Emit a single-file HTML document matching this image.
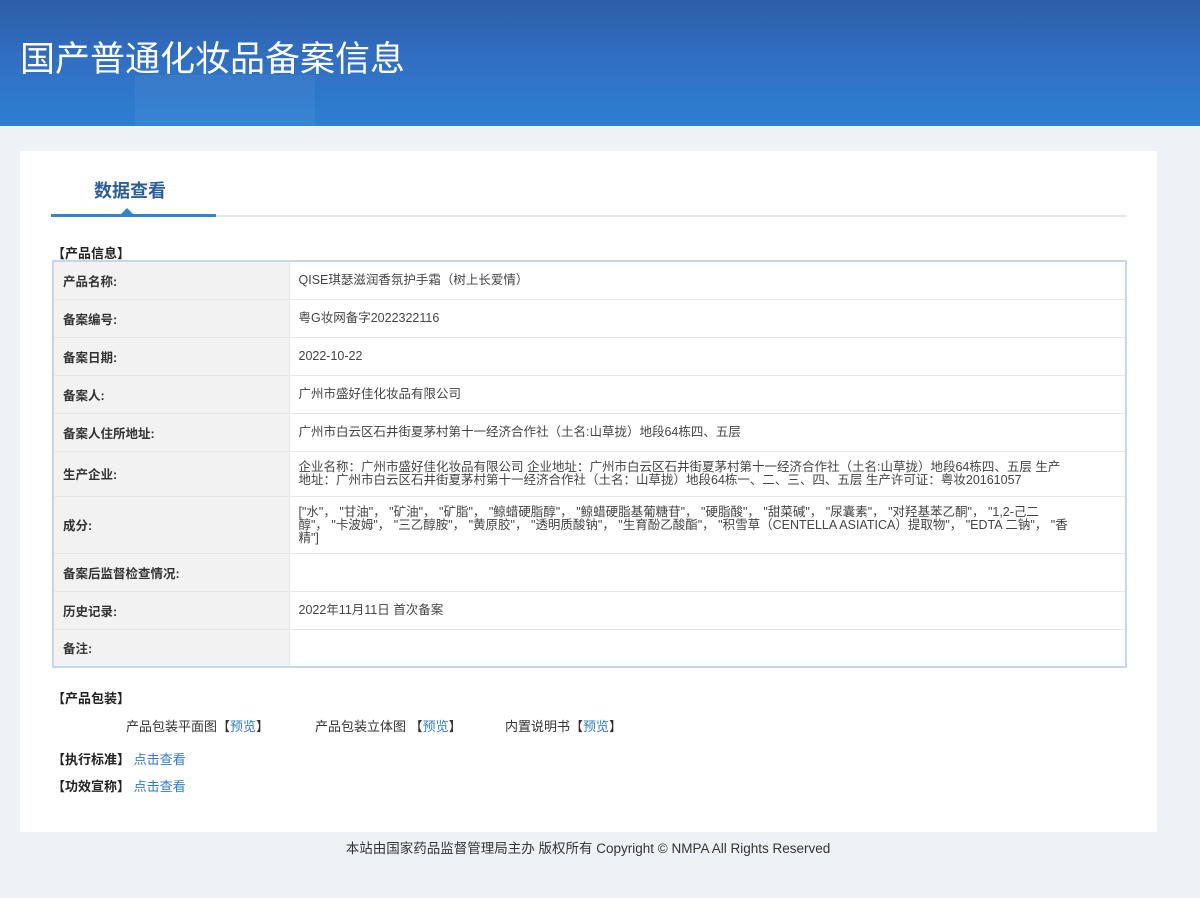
<!DOCTYPE html>
<html><head><meta charset="utf-8"><style>
*{margin:0;padding:0;box-sizing:border-box}
body{width:1200px;height:898px;background:#eef2f6;font-family:"Liberation Sans","Noto Sans CJK SC",sans-serif;color:#333;position:relative;overflow:hidden}
.hd{position:absolute;left:0;top:0;width:1200px;height:126px;background:linear-gradient(180deg,#2d5ea8 0%,#3070c4 50%,#2c7fd2 100%)}
.hd .g{position:absolute;left:135px;top:75px;width:180px;height:51px;background:rgba(255,255,255,0.05)}
.hd h1{position:absolute;left:20px;top:31px;font-size:35px;font-weight:normal;color:#fff;font-family:"Noto Sans CJK SC",sans-serif}
.card{position:absolute;left:20px;top:151px;width:1137px;height:681px;background:#fff}
.tab{position:absolute;left:74px;top:26px;font-size:18px;font-weight:bold;color:#2a5d9a}
.line{position:absolute;left:31px;top:64px;width:1076px;height:2px;background:#e6e8ec}
.line2{position:absolute;left:31px;top:63px;width:165px;height:3px;background:#2f85d0}
.tri{position:absolute;left:101px;top:57px;width:0;height:0;border-left:6px solid transparent;border-right:6px solid transparent;border-bottom:6px solid #2f85d0}
.sec{position:absolute;font-size:13px;font-weight:bold;color:#222}
table{position:absolute;left:32px;top:109px;width:1075px;border-collapse:collapse;border:2px solid #c6d6ea;font-size:12.5px}
td{border-bottom:1px solid #e8e8e8;padding:0 9px;vertical-align:middle}
td.l{width:236px;background:#f2f2f2;font-weight:bold;color:#333;border-right:1px solid #e8e8e8}
td.v{color:#444;line-height:13px;white-space:nowrap}
.a{color:#2f7ccc}
.t{position:absolute;font-size:13px;color:#333}
.ft{position:absolute;left:0;width:1176px;top:837px;text-align:center;font-size:13.5px;color:#333}
</style></head><body>
<div class="hd"><div class="g"></div><h1>国产普通化妆品备案信息</h1></div>
<div class="card">
<div class="tab">数据查看</div>
<div class="line"></div><div class="line2"></div><div class="tri"></div>
<div class="sec" style="left:32px;top:92px">【产品信息】</div>
<table>
<tr style="height:38px"><td class="l">产品名称:</td><td class="v">QISE琪瑟滋润香氛护手霜（树上长爱情）</td></tr>
<tr style="height:38px"><td class="l">备案编号:</td><td class="v">粤G妆网备字2022322116</td></tr>
<tr style="height:38px"><td class="l">备案日期:</td><td class="v">2022-10-22</td></tr>
<tr style="height:38px"><td class="l">备案人:</td><td class="v">广州市盛好佳化妆品有限公司</td></tr>
<tr style="height:38px"><td class="l">备案人住所地址:</td><td class="v">广州市白云区石井街夏茅村第十一经济合作社（土名:山草拢）地段64栋四、五层</td></tr>
<tr style="height:45px"><td class="l">生产企业:</td><td class="v">企业名称：广州市盛好佳化妆品有限公司 企业地址：广州市白云区石井街夏茅村第十一经济合作社（土名:山草拢）地段64栋四、五层 生产<br>地址：广州市白云区石井街夏茅村第十一经济合作社（土名：山草拢）地段64栋一、二、三、四、五层 生产许可证：粤妆20161057</td></tr>
<tr style="height:57px"><td class="l">成分:</td><td class="v" style="vertical-align:top;padding-top:9px">["水"， "甘油"， "矿油"， "矿脂"， "鲸蜡硬脂醇"， "鲸蜡硬脂基葡糖苷"， "硬脂酸"， "甜菜碱"， "尿囊素"， "对羟基苯乙酮"， "1,2-己二<br>醇"， "卡波姆"， "三乙醇胺"， "黄原胶"， "透明质酸钠"， "生育酚乙酸酯"， "积雪草（CENTELLA ASIATICA）提取物"， "EDTA 二钠"， "香<br>精"]</td></tr>
<tr style="height:38px"><td class="l">备案后监督检查情况:</td><td class="v"></td></tr>
<tr style="height:38px"><td class="l">历史记录:</td><td class="v">2022年11月11日 首次备案</td></tr>
<tr style="height:38px"><td class="l">备注:</td><td class="v"></td></tr>
</table>
<div class="sec" style="left:32px;top:537px">【产品包装】</div>
<div class="t" style="left:106px;top:565px">产品包装平面图【<span class="a">预览</span>】</div>
<div class="t" style="left:295px;top:565px">产品包装立体图 【<span class="a">预览</span>】</div>
<div class="t" style="left:485px;top:565px">内置说明书【<span class="a">预览</span>】</div>
<div class="sec" style="left:32px;top:598px">【执行标准】 <span class="a" style="font-weight:normal">点击查看</span></div>
<div class="sec" style="left:32px;top:625px">【功效宣称】 <span class="a" style="font-weight:normal">点击查看</span></div>
</div>
<div class="ft">本站由国家药品监督管理局主办 版权所有 Copyright © NMPA All Rights Reserved</div>
</body></html>
